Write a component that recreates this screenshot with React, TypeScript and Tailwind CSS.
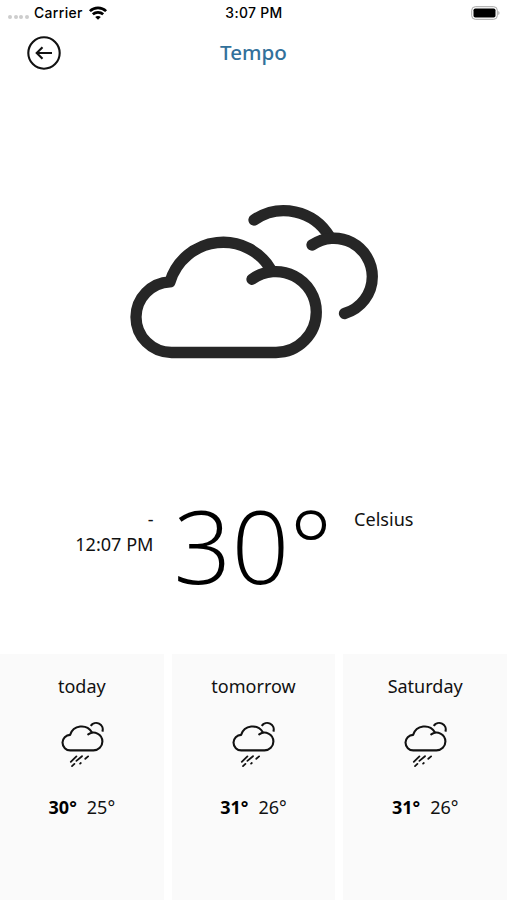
const forecast = [
  { day: "today", high: "30°", low: "25°" },
  { day: "tomorrow", high: "31°", low: "26°" },
  { day: "Saturday", high: "31°", low: "26°" },
];

function StatusBar() {
  return (
    <div className="flex h-[26px] items-center justify-between pl-2 pr-[7px] font-['Inter','Liberation_Sans',sans-serif] text-[13.9px] font-medium tracking-[0.35px] text-black">
      <div className="flex w-[180px] items-center">
        <div className="mt-2 mr-[5px] flex gap-[1.7px]">
          {[0, 1, 2, 3].map((dot) => (
            <span key={dot} className="size-1 rounded-full bg-[#cdcdcd]" />
          ))}
        </div>
        <span className="w-[54px] whitespace-nowrap pt-px">Carrier</span>
        <svg width="20" height="16" viewBox="0 0 20 16" className="shrink-0" fill="none" stroke="#000" strokeWidth="2.7">
          <path d="M1.9 6.1C6.4 1.7 13.6 1.7 18.1 6.1" />
          <path d="M4.8 9.3C7.8 6.6 12.2 6.6 15.2 9.3" />
          <path d="M7.2 12 10 14.8 12.8 12C11.2 10.6 8.8 10.6 7.2 12Z" fill="#000" stroke="none" />
        </svg>
      </div>
      <span className="whitespace-nowrap pt-px">3:07 PM</span>
      <div className="flex w-[180px] justify-end">
        <svg width="29" height="14" viewBox="0 0 29 14">
          <rect x="0.7" y="0.7" width="25.6" height="12.6" rx="3.6" fill="#fff" stroke="#a6a6a6" />
          <rect x="2.5" y="2.5" width="22" height="9" rx="1.8" />
          <path d="M27.3 5v4c1.6-.7 1.6-3.3 0-4Z" fill="#a6a6a6" />
        </svg>
      </div>
    </div>
  );
}

function BackIcon() {
  return (
    <svg width="34" height="34" viewBox="0 0 34 34" fill="none" stroke="#111" strokeWidth="2.1">
      <circle cx="17" cy="17" r="15.7" />
      <path d="M25 17H10M15.5 11.2 9.7 17l5.8 5.8" />
    </svg>
  );
}

function CloudsIcon() {
  return (
    <svg
      width="249"
      height="154"
      viewBox="129 205 249 154"
      overflow="visible"
      fill="none"
      stroke="#262626"
      strokeWidth="11.3"
      strokeLinecap="round"
      strokeLinejoin="round"
    >
      <path d="M252 279.3A40.5 40.5 0 0 1 316.3 312A40.5 40.5 0 0 1 276 352.5H171.5A35.5 35.5 0 0 1 136 317A35.5 35.5 0 0 1 170 281.8A55.5 55.5 0 0 1 271.5 270.5" />
      <path d="M254 220A53 53 0 0 1 329.5 236.5" />
      <path d="M312 245A38.5 38.5 0 0 1 372.3 276.5A38.5 38.5 0 0 1 344.5 313.5" />
    </svg>
  );
}

function RainIcon() {
  return (
    <svg
      width="44"
      height="48"
      viewBox="60.6 721 44 48"
      fill="none"
      stroke="#111"
      strokeWidth="2.1"
      strokeLinecap="round"
      strokeLinejoin="round"
    >
      <path d="M88.8 734.4A8.9 8.9 0 0 1 103 741.5A8.9 8.9 0 0 1 94.1 750.4H71A7.8 7.8 0 0 1 63.1 742.6A7.8 7.8 0 0 1 70.7 734.9A12.1 12.1 0 0 1 92.5 732.2" />
      <path d="M91.3 725.8A6.6 6.6 0 0 1 103 731.6" strokeLinecap="butt" />
      <path
        d="M71.4 761.8l5.6-5.4M77 760.9l5.6-4.7M85.9 758.8l2.8-2.4M72.6 766.1l2.4-2.2M80.7 763.6l.7-.6"
        strokeWidth="1.8"
      />
    </svg>
  );
}

export default function App() {
  return (
    <div className="flex h-[900px] w-[507px] flex-col overflow-hidden bg-white font-['Noto_Sans','Open_Sans',sans-serif] text-[#111]">
      <StatusBar />
      <header className="flex h-[54px] items-center justify-between px-[27px]">
        <button className="size-[34px]" aria-label="Back">
          <BackIcon />
        </button>
        <h1 className="pb-0.5 text-[20.6px] font-medium text-[#32719b]">Tempo</h1>
        <span className="w-[34px]" />
      </header>
      <div className="flex h-[403px] justify-center pt-[125px]">
        <CloudsIcon />
      </div>
      <section className="flex h-[171px] pt-6 text-[18px] leading-[25px]">
        <div className="w-[153.5px] text-right">
          <p>-</p>
          <p className="text-[18.1px]">12:07 PM</p>
        </div>
        <div className="-mt-[27px] w-[200.5px] whitespace-nowrap pl-5 font-['Open_Sans','Noto_Sans',sans-serif] text-[101.5px] font-[325] leading-[130px] text-black">
          30°
        </div>
        <div className="text-[18.1px]">Celsius</div>
      </section>
      <section className="grid flex-1 grid-cols-3 gap-2">
        {forecast.map(({ day, high, low }) => (
          <article key={day} className="flex flex-col items-center bg-[#fafafa] pt-5 text-[18px] leading-6">
            <h2>{day}</h2>
            <div className="mt-[23px]">
              <RainIcon />
            </div>
            <p className="mt-[26px] flex gap-2.5">
              <span className="font-bold text-black">{high}</span>
              <span>{low}</span>
            </p>
          </article>
        ))}
      </section>
    </div>
  );
}
